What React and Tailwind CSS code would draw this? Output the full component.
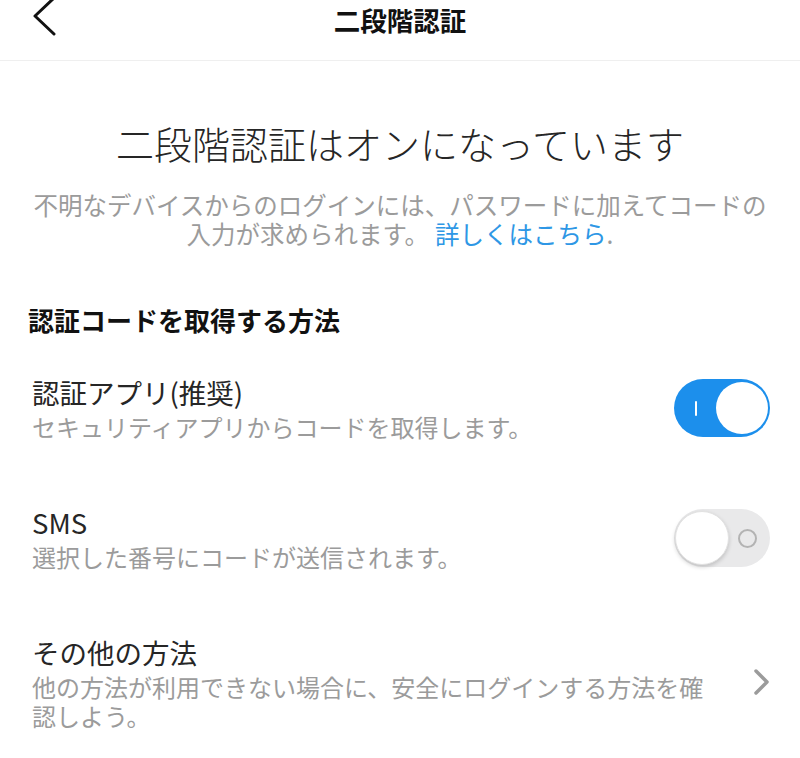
import { useState } from "react";

const font = { fontFamily: '"Noto Sans CJK JP", "Noto Sans", sans-serif' };

// iOS-style switch used by the method rows
const Switch = ({ on, onChange }) => (
    <button
        onClick={() => onChange(!on)}
        className={`relative flex items-center w-[96px] h-[58px] rounded-full shrink-0 transition-colors ${
            on ? "bg-[#1c8fec]" : "bg-[#e9e9ea]"
        }`}
    >
        {on ? (
            <>
                <span className="absolute left-[21px] top-[22px] w-[2px] h-[15px] bg-white rounded-full" />
                <span className="absolute right-[2px] top-[3px] size-[52px] rounded-full bg-white" />
            </>
        ) : (
            <>
                <span className="absolute right-[13px] top-[20px] size-[19px] rounded-full border-2 border-[#b3b3b3]" />
                <span className="absolute left-[1px] top-[2px] size-[54px] rounded-full bg-white shadow-[0_2px_4px_rgba(0,0,0,0.18)] border border-[#e2e2e2]" />
            </>
        )}
    </button>
);

const Row = ({ title, sub, children }) => (
    <div className="flex items-center justify-between pl-[32px] pr-[30px]">
        <div className="flex flex-col">
            <p className="text-[27.5px] leading-[36px] text-[#262626]">{title}</p>
            <p className="mt-[2px] text-[24px] leading-[29px] text-[#9b9b9b] max-w-[684px]">{sub}</p>
        </div>
        {children}
    </div>
);

export default function App() {
    const [appOn, setAppOn] = useState(true);
    const [smsOn, setSmsOn] = useState(false);

    return (
        <div className="w-[800px] h-[758px] bg-white overflow-hidden" style={font}>
            {/* Header */}
            <header className="grid grid-cols-[1fr_auto_1fr] h-[61px] border-b border-[#efefef]">
                <button className="flex items-start pl-[32px]">
                    <svg width="26" height="36" viewBox="0 0 26 36" fill="none">
                        <path d="M22 -2 L3 16 L22 34" stroke="#111" strokeWidth="3" strokeLinecap="round" strokeLinejoin="round" />
                    </svg>
                </button>
                <h1 className="text-[26.5px] leading-[40px] font-bold text-[#111]">二段階認証</h1>
                <div />
            </header>

            {/* Status */}
            <div className="flex flex-col items-center px-[20px]">
                <h2 className="mt-[57px] text-[38px] leading-[49px] font-light text-[#262626]">
                    二段階認証はオンになっています
                </h2>
                <p className="mt-[23px] text-[24.5px] leading-[29px] text-center text-[#9b9b9b]">
                    不明なデバイスからのログインには、パスワードに加えてコードの
                    <br />
                    <span>入力が求められます。</span>
                    <a className="ml-[6px] text-[#2e97e5]">詳しくはこちら</a>
                    <span>.</span>
                </p>
            </div>

            {/* Methods */}
            <h3 className="mt-[55px] pl-[28px] text-[26px] leading-[34px] font-bold text-[#111]">
                認証コードを取得する方法
            </h3>
            <div className="mt-[37px] flex flex-col gap-[63px]">
                <Row title="認証アプリ(推奨)" sub="セキュリティアプリからコードを取得します。">
                    <Switch on={appOn} onChange={setAppOn} />
                </Row>
                <Row title="SMS" sub="選択した番号にコードが送信されます。">
                    <Switch on={smsOn} onChange={setSmsOn} />
                </Row>
                <Row title="その他の方法" sub="他の方法が利用できない場合に、安全にログインする方法を確認しよう。">
                    <svg width="20" height="28" viewBox="0 0 20 28" fill="none" className="mr-[-2px]">
                        <path d="M4 3 L15 14 L4 25" stroke="#9b9b9b" strokeWidth="3.5" strokeLinecap="round" strokeLinejoin="round" />
                    </svg>
                </Row>
            </div>
        </div>
    );
}
